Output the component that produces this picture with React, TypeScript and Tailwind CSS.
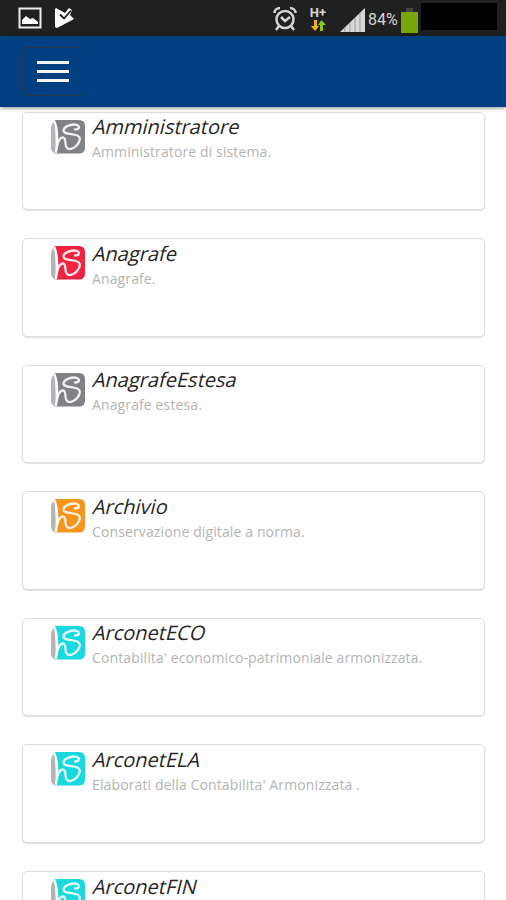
interface Service {
  name: string;
  description?: string;
  color: string;
}

const services: Service[] = [
  { name: "Amministratore", description: "Amministratore di sistema.", color: "#808285" },
  { name: "Anagrafe", description: "Anagrafe.", color: "#ee2440" },
  { name: "AnagrafeEstesa", description: "Anagrafe estesa.", color: "#808285" },
  { name: "Archivio", description: "Conservazione digitale a norma.", color: "#f7941e" },
  {
    name: "ArconetECO",
    description: "Contabilita' economico-patrimoniale armonizzata.",
    color: "#19d8de",
  },
  { name: "ArconetELA", description: "Elaborati della Contabilita' Armonizzata .", color: "#19d8de" },
  { name: "ArconetFIN", color: "#19d8de" },
];

function ServiceLogo({ color }: { color: string }) {
  return (
    <svg viewBox="0 0 34 34" className="size-[34px] shrink-0" fill="none">
      <path d="M4 .5C0 4 0 7 0 11v17c0 3 2 5 5 6z" fill="#b3b5b8" />
      <path d="M3.500 0H28q6 0 6 6v21.500q0 6-6 6H5c3-10 3-23-1.500-33.500z" fill={color} />
      <path
        d="M3.500 1.500C6.500 9 7 22 5 32C6 24 8.500 17.500 12 17.500C16.500 17.500 12 28.500 18 29C24 29 30 22 28.500 17.500C26.500 12.500 12 16 12.500 10C14 4.500 27.500 2.500 28 7C28 9 26 9.500 24 9.500"
        stroke="#fff"
        strokeWidth="2.300"
        strokeLinecap="round"
        strokeLinejoin="round"
        opacity=".88"
      />
    </svg>
  );
}

function StatusBar() {
  return (
    <div className="flex h-9 shrink-0 items-center bg-[#202020] text-[#d5d5d5]">
      <svg viewBox="0 0 24 22" className="ml-[18px] h-[22px] w-6" fill="none">
        <rect x="1.500" y="1.500" width="21" height="19" stroke="#eee" strokeWidth="2" />
        <path d="M4 17v-4l4-4 4 3 3-1 5 4v2z" fill="#fff" />
      </svg>
      <svg viewBox="0 0 20 22" className="ml-3 h-[22px] w-5">
        <path d="M1 2l1-1 9 5 4-5 3 2-2 5 4 4L3 21l-2-1z" fill="#fff" />
        <path d="M6 7.500l4 4 7-8" stroke="#202020" strokeWidth="1.800" fill="none" />
      </svg>
      <svg
        viewBox="0 0 24 26"
        className="ml-[199px] h-[26px] w-6"
        fill="none"
        stroke="#d5d5d5"
        strokeWidth="2.500"
      >
        <circle cx="12" cy="14.500" r="8.500" />
        <path d="M8 12l4 4 5-4M1.500 8C1.500 5 4 3 7 3M17 3c3 0 5.500 2 5.500 5M6 21l-3 4M18 21l3 4" />
      </svg>
      <div className="ml-[11px] flex h-[27px] w-5 flex-col items-center">
        <span className="font-['Roboto',sans-serif] text-[13px] leading-[15px] font-bold">H+</span>
        <svg viewBox="0 0 15 11" className="h-[11px] w-[15px] shrink-0">
          <path d="M3 0h3v6h2l-4 5-4-5h3z" fill="#efb51b" />
          <path d="M9 11h3V5h3l-4.500-5L7 5h2z" fill="#86c61d" />
        </svg>
      </div>
      <svg viewBox="0 0 25 24" className="mt-1 ml-3 h-6 w-[25px]">
        <path d="M0 24L25 0v24z" fill="#d8d8d8" />
        <path d="M5 19v5M10 14v10M15 10v14M20 5v19" stroke="#999" />
      </svg>
      <span className="mt-[3px] ml-[3px] w-[31px] font-['Roboto',sans-serif] text-[16px]">84%</span>
      <svg viewBox="0 0 17 26" className="mt-[3px] ml-[2px] h-[26px] w-[17px]">
        <path d="M5 1h7v4H5z" fill="#444" />
        <path d="M0 5h17v21H0z" fill="#7ba50d" />
      </svg>
      <div className="mb-[3px] ml-[3px] h-[27px] w-[76px] bg-black" />
    </div>
  );
}

function NavBar() {
  return (
    <header className="z-10 flex h-[71px] shrink-0 items-center bg-[#004080] pl-[22px] shadow-[0_1px_4px_rgba(0,0,0,0.45)]">
      <button
        aria-label="Menu"
        className="flex h-[49px] w-[62px] flex-col items-center justify-center gap-[6px] rounded-[5px] border border-[#28394f]"
      >
        <span className="h-[3px] w-8 bg-[#f2f5fb]" />
        <span className="h-[3px] w-8 bg-[#f2f5fb]" />
        <span className="h-[3px] w-8 bg-[#f2f5fb]" />
      </button>
    </header>
  );
}

function ServiceCard({ name, description, color }: Service) {
  return (
    <div className="flex h-[98.600px] shrink-0 gap-[7px] rounded-[5px] border border-[#dedede] bg-white pt-[7px] pl-[28px] shadow-[0_1px_1px_rgba(0,0,0,0.12)]">
      <ServiceLogo color={color} />
      <div className="-mt-[6.500px]">
        <p className="w-fit -skew-x-[14deg] pl-[1.500px] text-[20px] leading-[27px] text-[#262626]">
          {name}
        </p>
        {description && (
          <p className="text-[14px] leading-[23px] tracking-[0.120px] text-[#b4b4b4]">
            {description}
          </p>
        )}
      </div>
    </div>
  );
}

export default function App() {
  return (
    <div className="flex h-[900px] w-full flex-col overflow-hidden bg-white font-['Open_Sans','Noto_Sans',sans-serif]">
      <StatusBar />
      <NavBar />
      <main className="flex min-h-0 flex-1 flex-col gap-[28px] overflow-hidden pt-[4.500px] pr-[21px] pl-[22px]">
        {services.map((service) => (
          <ServiceCard key={service.name} {...service} />
        ))}
      </main>
    </div>
  );
}
